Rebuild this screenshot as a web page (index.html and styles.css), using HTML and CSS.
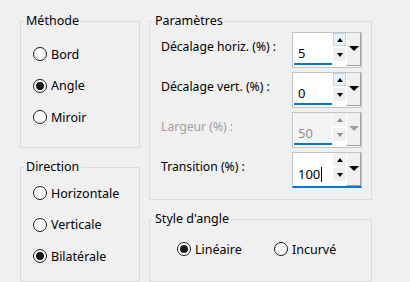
FILE: index.html
```html
<!DOCTYPE html>
<html lang="fr">
<head>
    <meta charset="UTF-8">
    <title>Angle</title>
    <link rel="stylesheet" href="styles.css">
</head>
<body>
    <div class="dialog">
        <div class="col-left">
            <fieldset class="group group-method">
                <legend>Méthode</legend>
                <div class="radio-list">
                    <label class="radio"><span class="dot"></span>Bord</label>
                    <label class="radio"><span class="dot checked"></span>Angle</label>
                    <label class="radio"><span class="dot"></span>Miroir</label>
                </div>
            </fieldset>
            <fieldset class="group group-direction">
                <legend>Direction</legend>
                <div class="radio-list">
                    <label class="radio"><span class="dot"></span>Horizontale</label>
                    <label class="radio"><span class="dot"></span>Verticale</label>
                    <label class="radio"><span class="dot checked"></span>Bilatérale</label>
                </div>
            </fieldset>
        </div>

        <div class="col-right">
            <fieldset class="group group-params">
                <legend>Paramètres</legend>
                <div class="param-row">
                    <span class="param-label">Décalage horiz. (%) :</span>
                    <div class="spin">
                        <span class="spin-value">5</span>
                        <span class="spin-btns"><span class="btn-up hot"><i class="tri-up"></i></span><span class="btn-down"><i class="tri-down"></i></span></span>
                        <span class="spin-drop"><i class="tri-big"></i></span>
                    </div>
                </div>
                <div class="param-row">
                    <span class="param-label">Décalage vert. (%) :</span>
                    <div class="spin">
                        <span class="spin-value">0</span>
                        <span class="spin-btns"><span class="btn-up hot"><i class="tri-up"></i></span><span class="btn-down"><i class="tri-down"></i></span></span>
                        <span class="spin-drop"><i class="tri-big"></i></span>
                    </div>
                </div>
                <div class="param-row disabled">
                    <span class="param-label">Largeur (%) :</span>
                    <div class="spin">
                        <span class="spin-value">50</span>
                        <span class="spin-btns"><span class="btn-up"><i class="tri-up"></i></span><span class="btn-down"><i class="tri-down"></i></span></span>
                        <span class="spin-drop"><i class="tri-big"></i></span>
                    </div>
                </div>
                <div class="param-row">
                    <span class="param-label">Transition (%) :</span>
                    <div class="spin focused">
                        <span class="spin-value">100<span class="caret"></span></span>
                        <span class="spin-btns"><span class="btn-up"><i class="tri-up"></i></span><span class="btn-down"><i class="tri-down"></i></span></span>
                        <span class="spin-drop"><i class="tri-big"></i></span>
                    </div>
                </div>
            </fieldset>
            <fieldset class="group group-style">
                <legend>Style d'angle</legend>
                <div class="radio-row">
                    <label class="radio"><span class="dot checked"></span>Linéaire</label>
                    <label class="radio"><span class="dot"></span>Incurvé</label>
                </div>
            </fieldset>
        </div>
    </div>
</body>
</html>
```

FILE: styles.css
```css
body {
    margin: 0;
    background-color: #f0f0f0;
    font-family: 'Noto Sans', 'Liberation Sans', sans-serif;
    font-size: 12px;
    color: #000;
}
.dialog {
    display: flex;
    gap: 9px;
    padding: 13px 0 0 20px;
    width: 410px;
    height: 282px;
    box-sizing: border-box;
}
.col-left {
    width: 120px;
    display: flex;
    flex-direction: column;
    gap: 11px;
}
.col-right {
    width: 223px;
    display: flex;
    flex-direction: column;
    gap: 11px;
}
.group {
    margin: 0;
    padding: 0;
    min-width: 0;
    border: 1px solid #dcdcdc;
    box-sizing: border-box;
}
.group legend {
    margin-left: 3px;
    padding: 0 2px;
    line-height: 16px;
    font-size: 12.5px;
}
.group-method { height: 135px; }
.group-direction { height: 123px; }
.group-params { height: 187px; }
.group-style { height: 71px; }

.radio-list {
    display: flex;
    flex-direction: column;
    gap: 11.5px;
    padding-left: 12px;
}
.group-method .radio-list { padding-top: 15px; }
.group-direction .radio-list { padding-top: 8px; }
.radio-row {
    display: flex;
    padding: 12px 0 0 27px;
}
.radio-row .radio { width: 100px; }
.radio {
    display: flex;
    align-items: center;
    gap: 4px;
    height: 20px;
    font-size: 12.5px;
}
.dot {
    width: 14px;
    height: 14px;
    border: 1px solid #1a1a1a;
    border-radius: 50%;
    box-sizing: border-box;
    background: #fff;
    display: flex;
    align-items: center;
    justify-content: center;
}
.dot.checked::after {
    content: '';
    width: 8px;
    height: 8px;
    border-radius: 50%;
    background: #1a1a1a;
}

.param-row {
    display: flex;
    align-items: flex-start;
    padding-left: 11px;
    height: 40px;
}
.param-row:first-of-type { margin-top: 3px; }
.param-label {
    width: 131px;
    line-height: 20px;
    margin-top: 4.5px;
    font-size: 12.2px;
}
.disabled .param-label { color: #a0a0a0; }

.spin {
    display: flex;
    width: 70px;
    height: 36px;
    border: 1px solid #c4c4c4;
    box-sizing: border-box;
    background: #fff;
}
.spin-value {
    width: 39px;
    padding: 10px 0 0 4px;
    box-sizing: border-box;
    height: 32px;
    margin: 0 1px;
    line-height: 20px;
    font-size: 13px;
    border-bottom: 2px solid #0078d7;
    display: flex;
    align-items: center;
}
.caret {
    width: 1px;
    height: 15px;
    background: #000;
    margin-left: 1px;
}
.spin-btns {
    width: 14px;
    display: flex;
    flex-direction: column;
    gap: 1px;
}
.btn-up, .btn-down {
    height: 13px;
    display: flex;
    align-items: center;
    justify-content: center;
    background: #f0f0f0;
    border: 1px solid #f0f0f0;
    box-sizing: border-box;
}
.btn-down { margin-top: 1px; }
.btn-up.hot {
    background: #e5f1fb;
    border-color: #b9d7f2;
}
.tri-up, .tri-down {
    width: 0;
    height: 0;
    border-left: 3px solid transparent;
    border-right: 3px solid transparent;
}
.tri-up { border-bottom: 4px solid #000; }
.tri-down { border-top: 4px solid #000; }
.spin-drop {
    width: 15px;
    height: 33px;
    background: #f0f0f0;
    border-left: 1px solid #fff;
    border-right: 1px solid #a0a0a0;
    border-bottom: 1px solid #a0a0a0;
    box-sizing: border-box;
    display: flex;
    justify-content: center;
    padding-top: 13px;
}
.tri-big {
    width: 0;
    height: 0;
    border-left: 5px solid transparent;
    border-right: 5px solid transparent;
    border-top: 5px solid #000;
}
.disabled .spin-value {
    color: #8c8c8c;
    background: #f4f4f4;
}
.disabled .tri-up { border-bottom-color: #888; }
.disabled .tri-down { border-top-color: #888; }
.disabled .tri-big { border-top-color: #a0a0a0; }
.focused .spin-value { border-bottom: none; }
.focused { border-bottom: 2px solid #0078d7; }
```
